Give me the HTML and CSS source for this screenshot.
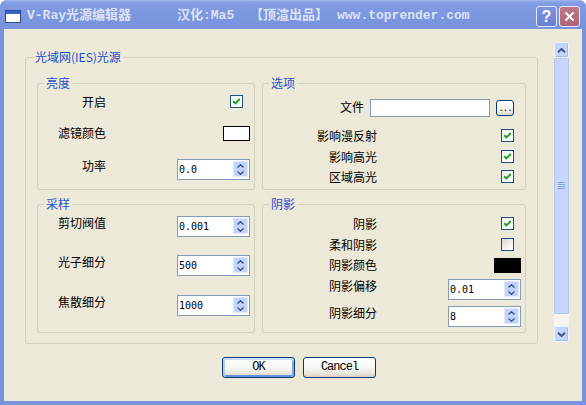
FILE: index.html
```html
<!DOCTYPE html>
<html lang="zh-CN">
<head>
<meta charset="utf-8">
<title>V-Ray光源编辑器</title>
<link rel="stylesheet" href="styles.css">
</head>
<body>
<div class="window">
  <div class="titlebar">
    <svg class="app-icon" viewBox="0 0 16 13" width="16" height="13">
      <rect x="0.5" y="0.5" width="15" height="12" fill="#ffffff" stroke="#2e4a8e"/>
      <rect x="1" y="1" width="14" height="3" fill="#3a62c8"/>
    </svg>
    <div class="title">
      <span class="seg seg1">V-Ray光源编辑器</span>
      <span class="seg seg2">汉化:Ma5</span>
      <span class="seg seg3">【顶渲出品】</span>
      <span class="seg seg4">www.toprender.com</span>
    </div>
    <div class="caption-btns">
      <div class="cap-btn help">?</div>
      <div class="cap-btn close">
        <svg viewBox="0 0 11 11" width="11" height="11"><path d="M1.5 1.5L9.5 9.5M9.5 1.5L1.5 9.5" stroke="#ffffff" stroke-width="2" fill="none"/></svg>
      </div>
    </div>
  </div>

  <div class="client">
    <div class="main">
      <div class="panel">
        <fieldset class="group outer">
          <legend>光域网(IES)光源</legend>
          <div class="grid">

            <fieldset class="group">
              <legend>亮度</legend>
              <div class="row mt5">
                <span class="label lw-left">开启</span>
                <span class="chk on"><svg viewBox="0 0 11 11" width="11" height="11"><path d="M2.2 5.2L4.4 7.4L8.8 3"/></svg></span>
              </div>
              <div class="row mt17">
                <span class="label lw-left">滤镜颜色</span>
                <span class="swatch white"></span>
              </div>
              <div class="row mt18">
                <span class="label lw-left">功率</span>
                <div class="spin">
                  <span class="spin-val">0.0</span>
                  <div class="spin-btns">
                    <span><svg viewBox="0 0 7 4" width="7" height="4"><path d="M0.5 3.5L3.5 0.7L6.5 3.5"/></svg></span>
                    <span><svg viewBox="0 0 7 4" width="7" height="4"><path d="M0.5 0.5L3.5 3.3L6.5 0.5"/></svg></span>
                  </div>
                </div>
              </div>
            </fieldset>

            <fieldset class="group">
              <legend>选项</legend>
              <div class="row mt9">
                <span class="label lw-file">文件</span>
                <span class="textbox"></span>
                <span class="browse">...</span>
              </div>
              <div class="row mt12">
                <span class="label lw-right">影响漫反射</span>
                <span class="chk on"><svg viewBox="0 0 11 11" width="11" height="11"><path d="M2.2 5.2L4.4 7.4L8.8 3"/></svg></span>
              </div>
              <div class="row mt7">
                <span class="label lw-right">影响高光</span>
                <span class="chk on"><svg viewBox="0 0 11 11" width="11" height="11"><path d="M2.2 5.2L4.4 7.4L8.8 3"/></svg></span>
              </div>
              <div class="row mt6">
                <span class="label lw-right">区域高光</span>
                <span class="chk on"><svg viewBox="0 0 11 11" width="11" height="11"><path d="M2.2 5.2L4.4 7.4L8.8 3"/></svg></span>
              </div>
            </fieldset>

            <fieldset class="group">
              <legend>采样</legend>
              <div class="row mt5">
                <span class="label lw-left">剪切阀值</span>
                <div class="spin">
                  <span class="spin-val">0.001</span>
                  <div class="spin-btns">
                    <span><svg viewBox="0 0 7 4" width="7" height="4"><path d="M0.5 3.5L3.5 0.7L6.5 3.5"/></svg></span>
                    <span><svg viewBox="0 0 7 4" width="7" height="4"><path d="M0.5 0.5L3.5 3.3L6.5 0.5"/></svg></span>
                  </div>
                </div>
              </div>
              <div class="row mt18">
                <span class="label lw-left">光子细分</span>
                <div class="spin">
                  <span class="spin-val">500</span>
                  <div class="spin-btns">
                    <span><svg viewBox="0 0 7 4" width="7" height="4"><path d="M0.5 3.5L3.5 0.7L6.5 3.5"/></svg></span>
                    <span><svg viewBox="0 0 7 4" width="7" height="4"><path d="M0.5 0.5L3.5 3.3L6.5 0.5"/></svg></span>
                  </div>
                </div>
              </div>
              <div class="row mt19">
                <span class="label lw-left">焦散细分</span>
                <div class="spin">
                  <span class="spin-val">1000</span>
                  <div class="spin-btns">
                    <span><svg viewBox="0 0 7 4" width="7" height="4"><path d="M0.5 3.5L3.5 0.7L6.5 3.5"/></svg></span>
                    <span><svg viewBox="0 0 7 4" width="7" height="4"><path d="M0.5 0.5L3.5 3.3L6.5 0.5"/></svg></span>
                  </div>
                </div>
              </div>
            </fieldset>

            <fieldset class="group">
              <legend>阴影</legend>
              <div class="row mt6">
                <span class="label lw-right">阴影</span>
                <span class="chk on"><svg viewBox="0 0 11 11" width="11" height="11"><path d="M2.2 5.2L4.4 7.4L8.8 3"/></svg></span>
              </div>
              <div class="row mt7">
                <span class="label lw-right">柔和阴影</span>
                <span class="chk off"></span>
              </div>
              <div class="row mt6">
                <span class="label lw-right">阴影颜色</span>
                <span class="swatch black"></span>
              </div>
              <div class="row mt6">
                <span class="label lw-right">阴影偏移</span>
                <div class="spin">
                  <span class="spin-val">0.01</span>
                  <div class="spin-btns">
                    <span><svg viewBox="0 0 7 4" width="7" height="4"><path d="M0.5 3.5L3.5 0.7L6.5 3.5"/></svg></span>
                    <span><svg viewBox="0 0 7 4" width="7" height="4"><path d="M0.5 0.5L3.5 3.3L6.5 0.5"/></svg></span>
                  </div>
                </div>
              </div>
              <div class="row mt6">
                <span class="label lw-right">阴影细分</span>
                <div class="spin">
                  <span class="spin-val">8</span>
                  <div class="spin-btns">
                    <span><svg viewBox="0 0 7 4" width="7" height="4"><path d="M0.5 3.5L3.5 0.7L6.5 3.5"/></svg></span>
                    <span><svg viewBox="0 0 7 4" width="7" height="4"><path d="M0.5 0.5L3.5 3.3L6.5 0.5"/></svg></span>
                  </div>
                </div>
              </div>
            </fieldset>

          </div>
        </fieldset>
      </div>

      <div class="scrollbar">
        <div class="sb-btn"><svg viewBox="0 0 9 5" width="9" height="5"><path d="M1 4.2L4.5 1L8 4.2"/></svg></div>
        <div class="sb-thumb">
          <svg viewBox="0 0 7 8" width="7" height="8"><path d="M0 0.5H7M0 2.5H7M0 4.5H7M0 6.5H7" stroke="#8aa6ea" stroke-width="1"/></svg>
        </div>
        <div class="sb-track"></div>
        <div class="sb-btn"><svg viewBox="0 0 9 5" width="9" height="5"><path d="M1 0.8L4.5 4L8 0.8"/></svg></div>
      </div>
    </div>

    <div class="buttons">
      <button class="btn default">OK</button>
      <button class="btn">Cancel</button>
    </div>
  </div>
</div>
</body>
</html>
```

FILE: styles.css
```css
* { box-sizing: border-box; }

html, body {
  margin: 0;
  padding: 0;
}

body {
  width: 586px;
  height: 405px;
  overflow: hidden;
  background: #ffffff;
  font-family: "Noto Sans CJK SC", "Liberation Sans", sans-serif;
  font-size: 12px;
  color: #000000;
}

.window {
  width: 586px;
  height: 405px;
  display: flex;
  flex-direction: column;
  background: #7893de;
  border-radius: 7px 7px 0 0;
}

/* ---------- title bar ---------- */
.titlebar {
  height: 29px;
  flex: none;
  display: flex;
  align-items: center;
  padding: 3px 6px 0 5px;
  border-radius: 7px 7px 0 0;
  background: linear-gradient(#a7bbf1 0, #8ea8ea 1px, #809be2 4px, #7a96df 18px, #7792dd 29px);
}

.app-icon {
  flex: none;
  display: block;
}

.title {
  display: flex;
  margin-left: 6px;
  color: #dbe2f5;
  font-family: "Liberation Mono", "Noto Sans CJK SC", monospace;
  font-weight: bold;
  font-size: 13px;
  line-height: 16px;
  white-space: pre;
}

.seg1 { width: 150px; }
.seg2 { width: 73px; }
.seg3 { width: 87px; }

.caption-btns {
  margin-left: auto;
  display: flex;
  gap: 2px;
}

.cap-btn {
  width: 21px;
  height: 21px;
  border: 1px solid #e3e9fa;
  border-radius: 3px;
  display: flex;
  align-items: center;
  justify-content: center;
  color: #ffffff;
}

.cap-btn.help {
  background: linear-gradient(#7b93df, #6981d6);
  font-family: "Liberation Sans", sans-serif;
  font-weight: bold;
  font-size: 16px;
  line-height: 19px;
}

.cap-btn.close {
  background: linear-gradient(#bd7986, #ad6677);
}

/* ---------- client ---------- */
.client {
  flex: none;
  height: 372px;
  margin: 0 4px;
  padding-top: 13px;
  background: #ece9d8;
}

.main {
  display: flex;
  height: 302px;
  padding-right: 13px;
}

.panel {
  flex: 1;
  padding: 8px 16px 0 21px;
}

/* ---------- group boxes ---------- */
.group {
  margin: 0;
  padding: 0;
  min-width: 0;
  border: 1px solid #d0d0bf;
  border-radius: 3px;
}

.group > legend {
  margin-left: 6px;
  padding: 0 2px;
  font-size: 12px;
  line-height: 14px;
  color: #1f4fd0;
}

.group.outer > legend {
  margin-left: 7px;
}

.grid {
  display: grid;
  grid-template-columns: 218px 264px;
  grid-template-rows: 114px 136px;
  column-gap: 7px;
  row-gap: 7px;
  padding: 12px 11px 10px;
}

/* ---------- rows ---------- */
.row {
  display: flex;
  align-items: flex-start;
}

.mt5 { margin-top: 5px; }
.mt6 { margin-top: 6px; }
.mt7 { margin-top: 7px; }
.mt9 { margin-top: 9px; }
.mt12 { margin-top: 12px; }
.mt17 { margin-top: 17px; }
.mt18 { margin-top: 18px; }
.mt19 { margin-top: 19px; }

.label {
  flex: none;
  text-align: right;
  line-height: 14px;
  white-space: nowrap;
}

.lw-left { width: 68px; }
.lw-right { width: 114px; }
.lw-file { width: 101px; margin-top: 1px; }

/* ---------- controls ---------- */
.chk {
  flex: none;
  width: 13px;
  height: 13px;
  margin-left: auto;
  margin-right: 11px;
  border: 1px solid #1c5180;
  background: linear-gradient(135deg, #f1f1ee, #ffffff);
}

.chk.off {
  background: linear-gradient(135deg, #d8d8d1, #f4f4f0 60%, #ffffff);
}

.chk svg {
  display: block;
}

.chk svg path {
  fill: none;
  stroke: #21a121;
  stroke-width: 2;
}

.swatch {
  flex: none;
  width: 27px;
  height: 15px;
  margin-left: auto;
  margin-right: 4px;
  border: 1px solid #000000;
}

.swatch.white { background: #ffffff; }
.swatch.black { background: #000000; }

.spin {
  flex: none;
  width: 73px;
  height: 21px;
  margin-left: auto;
  margin-right: 4px;
  display: flex;
  border: 1px solid #7f9db9;
  background: #ffffff;
}

.spin-val {
  flex: 1;
  padding-left: 1px;
  font-family: "DejaVu Sans Mono", "Liberation Mono", monospace;
  font-size: 10px;
  line-height: 19px;
}

.spin-btns {
  flex: none;
  width: 15px;
  margin: 1px 1px 2px 0;
  display: flex;
  flex-direction: column;
  border: 1px solid #dfe8fd;
  background: #c3d3fb;
}

.spin-btns span {
  flex: 1;
  display: flex;
  align-items: center;
  justify-content: center;
}

.spin-btns svg {
  display: block;
}

.spin-btns path {
  fill: none;
  stroke: #3c5590;
  stroke-width: 1.4;
}

.textbox {
  flex: none;
  width: 120px;
  height: 18px;
  margin-left: 6px;
  border: 1px solid #7f9db9;
  background: #ffffff;
}

.browse {
  flex: none;
  width: 18px;
  height: 16px;
  margin: 1px 11px 0 6px;
  border: 1px solid #003c74;
  border-radius: 3px;
  background: linear-gradient(#ffffff, #f3f2ec 60%, #dcd8cb);
  font-family: "Liberation Mono", monospace;
  font-size: 9px;
  line-height: 16px;
  text-align: center;
  letter-spacing: -1px;
  color: #000000;
}

/* ---------- scrollbar ---------- */
.scrollbar {
  flex: none;
  width: 15px;
  height: 300px;
  display: flex;
  flex-direction: column;
}

.sb-btn {
  flex: none;
  height: 16px;
  display: flex;
  align-items: center;
  justify-content: center;
  border: 1px solid #eef3fd;
  border-radius: 2px;
  background: #c4d5fb;
  box-shadow: inset -1px -1px 0 #a3bbf0;
}

.sb-btn path {
  fill: none;
  stroke: #3c5590;
  stroke-width: 2;
}

.sb-thumb {
  flex: none;
  height: 256px;
  display: flex;
  align-items: center;
  justify-content: center;
  border: 1px dotted #9fb6ee;
  border-radius: 2px;
  background: #c6d6fc;
}

.sb-track {
  flex: 1;
  background: #f6f5ef;
}

/* ---------- dialog buttons ---------- */
.buttons {
  display: flex;
  gap: 8px;
  margin-top: 13px;
  padding-left: 218px;
}

.btn {
  width: 73px;
  height: 21px;
  padding: 0;
  border: 1px solid #003c74;
  border-radius: 3px;
  background: linear-gradient(#ffffff, #f5f5f1 55%, #e6e3d8 85%, #d6d0c5);
  font-family: "Liberation Mono", monospace;
  font-size: 12px;
  letter-spacing: -1px;
  color: #000000;
  line-height: 19px;
}

.btn.default {
  box-shadow: inset 0 2px 0 #cfdefb, inset 2px 0 0 #b5cbf6, inset -2px 0 0 #8aa8ea, inset 0 -2px 0 #6a8ee0;
}
```
